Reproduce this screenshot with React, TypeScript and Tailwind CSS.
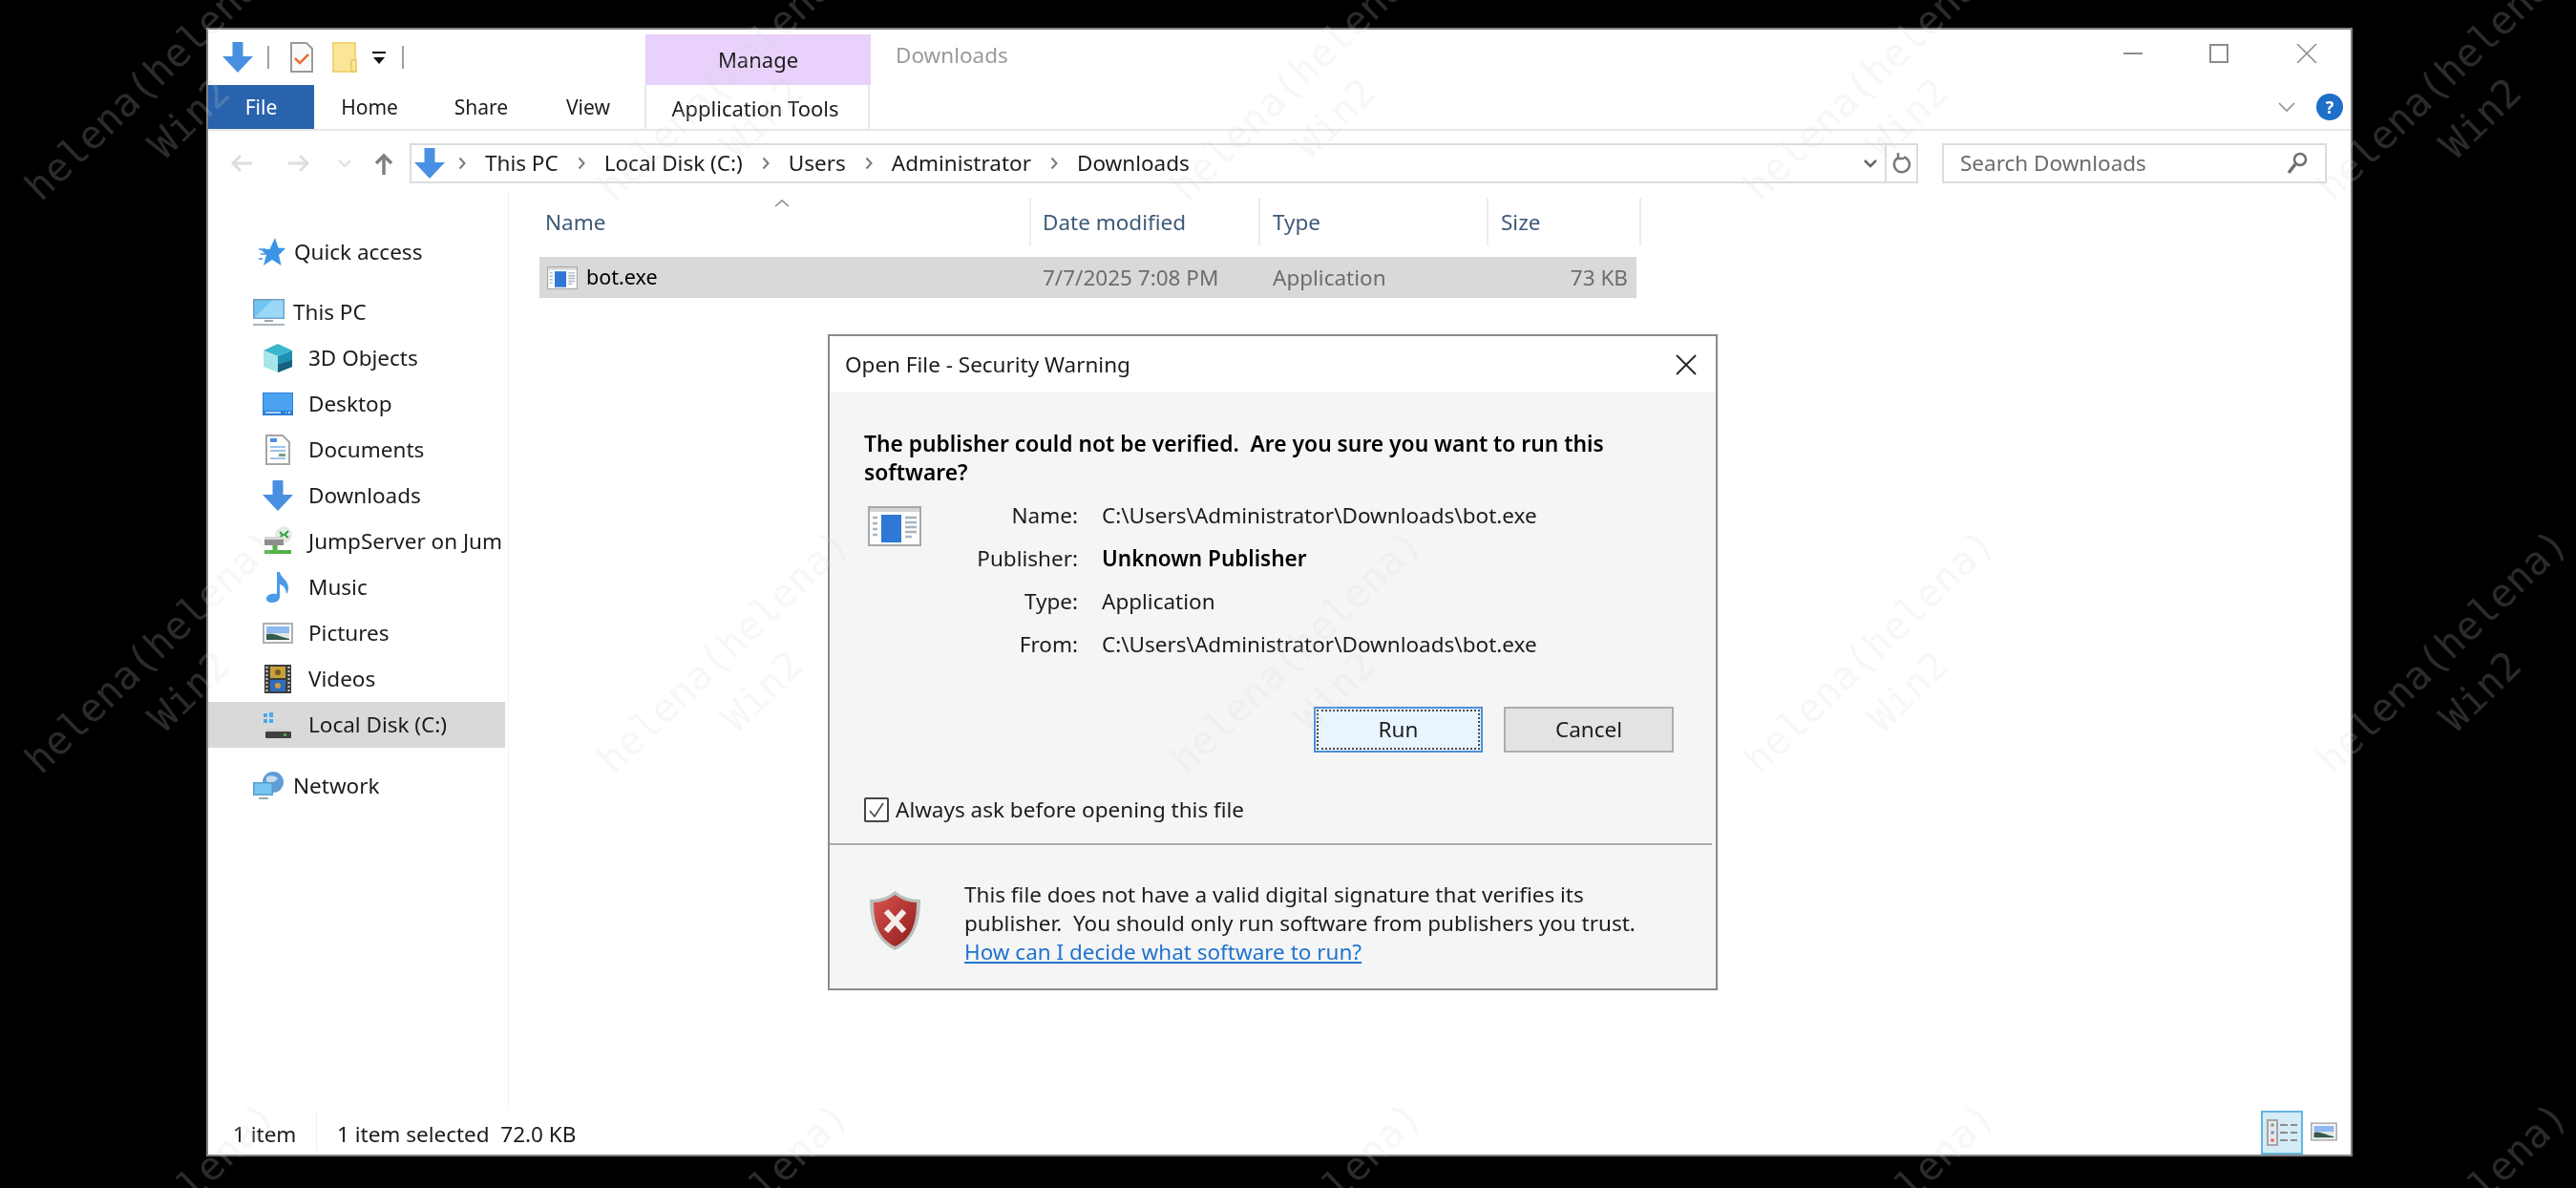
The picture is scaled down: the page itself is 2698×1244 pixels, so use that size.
import React from 'react'

const ArrowDown = ({ className = 'w-8 h-8' }: { className?: string }) => (
  <svg viewBox="0 0 32 32" className={className}>
    <path d="M10.5 0h11v15H32L16 32 0 15h10.5z" fill="#4a90e2" />
  </svg>
)

const NavArrow = ({ d, color, sw = 3 }: { d: string; color: string; sw?: number }) => (
  <svg viewBox="0 0 24 24" className="w-6 h-6" fill="none" stroke={color} strokeWidth={sw}>
    <path d={d} />
  </svg>
)

const Chevron = () => (
  <svg viewBox="0 0 8 14" className="w-[8px] h-[14px]" fill="none" stroke="#7a7a7a" strokeWidth="2">
    <path d="M1.5 1.5 6.5 7l-5 5.5" />
  </svg>
)

const ExeIcon = ({ className }: { className: string }) => (
  <svg viewBox="0 0 56 42" className={className}>
    <rect x="1" y="1" width="54" height="40" fill="#fdfdfd" stroke="#a8a8a8" strokeWidth="2" />
    <rect x="2" y="2" width="52" height="4" fill="#d4d4d4" />
    <rect x="14" y="9" width="21" height="29" fill="#2f78d6" />
    <path d="M5 12h5M5 18h5M5 24h5M5 30h5M39 12h12M39 17h12M39 22h12M39 27h12M39 32h7" stroke="#a9b4c0" strokeWidth="2.5" />
  </svg>
)

const Cube = () => (
  <svg viewBox="0 0 32 32" className="w-8 h-8">
    <path d="M16 1 31 8 16 14 1 8z" fill="#3cb6cf" />
    <path d="M1 8l15 6v17L1 25z" fill="#a6e6ea" />
    <path d="M31 8 16 14v17l15-6z" fill="#1e8fb0" />
    <path d="M16 23v8l15-6v-7z" fill="#17607f" />
  </svg>
)

const DesktopIcon = () => (
  <svg viewBox="0 0 32 24" className="w-8 h-6">
    <rect width="32" height="24" fill="#2c7fd8" />
    <rect x="1" y="1" width="30" height="18" fill="#4aa2f0" />
    <path d="M3 21h16M24 21h1M27 21h2" stroke="#dcecff" strokeWidth="1.5" />
  </svg>
)

const DocIcon = () => (
  <svg viewBox="0 0 26 32" className="w-[26px] h-8">
    <path d="M1 1h17l7 7v23H1z" fill="#fff" stroke="#a6a6a6" strokeWidth="2" />
    <path d="M5 6h7" stroke="#4a90e2" strokeWidth="4" />
    <path d="M5 13h16M5 17h16M5 25h16" stroke="#7fb0e6" strokeWidth="1.5" />
    <rect x="14" y="20" width="7" height="3" fill="#7f9a8a" />
  </svg>
)

const JumpIcon = () => (
  <svg viewBox="0 0 32 32" className="w-8 h-8">
    <circle cx="22" cy="9" r="9" fill="#e4ece4" />
    <path d="M18 6l3 3-3 3M27 5l-4 4 4 3" stroke="#2f9e44" strokeWidth="2" fill="none" />
    <rect x="2" y="11" width="20" height="9" fill="#8e8e8e" />
    <rect x="2" y="11" width="20" height="3" fill="#d8d8d8" />
    <path d="M13 20v5" stroke="#54b14c" strokeWidth="5" />
    <path d="M2 27h28" stroke="#54b14c" strokeWidth="4" />
  </svg>
)

const MusicIcon = () => (
  <svg viewBox="0 0 26 32" className="w-[26px] h-8">
    <path d="M12 0h3c1 6 9 8 9 17 0 3-1 5-2 6 0-5-3-9-7-10v13c0 3-3 6-8 6-4 0-6-2-6-4 0-4 5-6 11-5z" fill="#4a9be8" />
  </svg>
)

const PictureIcon = ({ className = 'w-8 h-[22px]' }: { className?: string }) => (
  <svg viewBox="0 0 32 22" className={className}>
    <rect x="1" y="1" width="30" height="20" fill="#fff" stroke="#b0b0b0" strokeWidth="2" />
    <rect x="4" y="4" width="24" height="7" fill="#8fb8ee" />
    <rect x="4" y="11" width="24" height="7" fill="#dfe8e4" />
    <path d="M4 12c6-2 12 2 24 5v1H4z" fill="#35594a" />
  </svg>
)

const VideoIcon = () => (
  <svg viewBox="0 0 28 30" className="w-7 h-[30px]">
    <rect width="28" height="30" fill="#3c3c3c" />
    <path d="M2.5 2v26M25.5 2v26" stroke="#d5d5d5" strokeWidth="2" strokeDasharray="2 2" />
    <rect x="6" y="2" width="16" height="12" fill="#c9a13a" />
    <rect x="6" y="16" width="16" height="12" fill="#2f6cc0" />
    <circle cx="14" cy="8" r="3" fill="#7a5a2a" />
    <circle cx="14" cy="22" r="3" fill="#c9a13a" />
  </svg>
)

const DiskIcon = () => (
  <svg viewBox="0 0 32 28" className="w-8 h-7">
    <path d="M1 2h4v4H1zM7 1h4v5H7zM1 8h4v4H1zM7 8h4v4H7z" fill="#4aa8ee" />
    <path d="M5 18h22l3 3H3z" fill="#d2d2d2" />
    <rect x="3" y="21" width="27" height="7" rx="1" fill="#3f3f3f" />
    <rect x="22" y="23.5" width="3" height="2" fill="#4fd14f" />
  </svg>
)

const MonitorIcon = () => (
  <svg viewBox="0 0 33 28" className="w-[33px] h-7">
    <rect width="33" height="21" fill="#6e9fc4" />
    <rect x="1.5" y="1.5" width="30" height="18" fill="#70c4f2" />
    <path d="M1.5 19.5 20 1.5h11.5v18z" fill="#9bd7f7" />
    <path d="M12 23h9" stroke="#9aa8b2" strokeWidth="2" />
    <path d="M0 27h33" stroke="#a9b5bd" strokeWidth="2" />
  </svg>
)

const StarIcon = () => (
  <svg viewBox="0 0 28 30" className="w-7 h-[30px]">
    <path d="M17 0l3.5 10.5L28 11l-7 7 2.5 11L14 23l-9 6 3-11-6-6h9.5z" fill="#3d94e6" />
    <path d="M0 12h7M2 17h5M0 22h4" stroke="#3d94e6" strokeWidth="1.5" />
  </svg>
)

const NetworkIcon = () => (
  <svg viewBox="0 0 33 30" className="w-[33px] h-[30px]">
    <circle cx="21" cy="11" r="11" fill="#5f9ed6" />
    <path d="M14 6c4-3 9-2 12 1-2 4-8 6-12 3z" fill="#c3dcf0" />
    <rect x="0" y="11" width="21" height="14" fill="#5b9ec9" />
    <rect x="1.5" y="12.5" width="18" height="11" fill="#74c6f0" />
    <path d="M6 28h10" stroke="#9aa8b2" strokeWidth="2" />
  </svg>
)

const Shield = () => (
  <svg viewBox="0 0 53 62" className="w-[53px] h-[62px]">
    <defs>
      <linearGradient id="shield" x1="0" y1="0" x2="1" y2="1">
        <stop offset="0" stopColor="#d9534f" />
        <stop offset="1" stopColor="#8e1c1a" />
      </linearGradient>
    </defs>
    <path d="M26.5 0C33 6 43 9 53 9c0 24-6 43-26.5 53C6 52 0 33 0 9c10 0 20-3 26.5-9z" fill="#b9c0bd" />
    <path d="M26.5 4C33 9 41 12 49 12c0 21-5 38-22.500 46C9 50 4 33 4 12c8 0 16-3 22.500-8z" fill="url(#shield)" />
    <path d="M17 21l19 21M36 21 17 42" stroke="#f4ecec" strokeWidth="6" />
  </svg>
)

const sideItems = [
  { label: '3D Objects', icon: <Cube /> },
  { label: 'Desktop', icon: <DesktopIcon /> },
  { label: 'Documents', icon: <DocIcon /> },
  { label: 'Downloads', icon: <ArrowDown /> },
  { label: 'JumpServer on Jum', icon: <JumpIcon /> },
  { label: 'Music', icon: <MusicIcon /> },
  { label: 'Pictures', icon: <PictureIcon /> },
  { label: 'Videos', icon: <VideoIcon /> },
  { label: 'Local Disk (C:)', icon: <DiskIcon />, active: true },
]

const crumbs = ['This PC', 'Local Disk (C:)', 'Users', 'Administrator', 'Downloads']

const details = [
  { label: 'Name:', value: 'C:\\Users\\Administrator\\Downloads\\bot.exe' },
  { label: 'Publisher:', value: 'Unknown Publisher', bold: true },
  { label: 'Type:', value: 'Application' },
  { label: 'From:', value: 'C:\\Users\\Administrator\\Downloads\\bot.exe' },
]

const marks = Array.from({ length: 15 }, (_, i) => i)

const Dialog = () => (
  <div className="absolute left-[649px] top-[319px] w-[932px] h-[687px] border-2 border-[#8a8a8a] bg-[#f5f5f5] flex flex-col">
    <div className="h-[59px] shrink-0 bg-white flex items-center justify-between pl-4 pr-[20px]">
      <span>Open File - Security Warning</span>
      <svg viewBox="0 0 22 22" className="w-[22px] h-[22px]" fill="none" stroke="#222" strokeWidth="1.8">
        <path d="M1 1l20 20M21 1 1 21" />
      </svg>
    </div>
    <div className="pl-9 pt-[39px] w-[860px] font-semibold text-black text-[22.800px] leading-[30px]">
      The publisher could not be verified.&nbsp; Are you sure you want to run this software?
    </div>
    <div className="flex mt-[7px] h-[185px]">
      <ExeIcon className="ml-[40px] mt-[13px] w-[56px] h-[42px]" />
      <div className="flex flex-col">
        {details.map((d) => (
          <div key={d.label} className="flex h-[45px] items-center">
            <span className="w-[164px] text-right">{d.label}</span>
            <span className={d.bold ? 'ml-[25px] font-semibold text-black' : 'ml-[25px]'}>{d.value}</span>
          </div>
        ))}
      </div>
    </div>
    <div className="flex justify-end gap-[22px] pr-[44px] mt-[38px]">
      <button className="w-[177px] h-[48px] bg-[#e9f5fe] border-2 border-[#4a90d9] p-[1px]">
        <span className="w-full h-full border-2 border-dotted border-[#4a4a4a] flex items-center justify-center">Run</span>
      </button>
      <button className="w-[178px] h-[48px] bg-[#e3e3e3] border-2 border-[#adadad]">Cancel</button>
    </div>
    <label className="flex items-center ml-9 mt-[47px] h-[26px]">
      <span className="w-[26px] h-[26px] border-2 border-[#444] bg-white flex items-center justify-center rounded-[2px]">
        <svg viewBox="0 0 18 18" className="w-[18px] h-[18px]" fill="none" stroke="#444" strokeWidth="1.6">
          <path d="M2 10l5 6L16 2" />
        </svg>
      </span>
      <span className="ml-[7px]">Always ask before opening this file</span>
    </label>
    <div className="mt-[22px] w-[924px] border-t-2 border-[#a8a8a8] shadow-[0_1px_0_#ffffff]" />
    <div className="flex mt-[21px]">
      <div className="ml-[42px] mt-[27px]">
        <Shield />
      </div>
      <div className="ml-[46px] w-[800px] pt-[16px] leading-[30px]">
        <p>This file does not have a valid digital signature that verifies its</p>
        <p>publisher.&nbsp; You should only run software from publishers you trust.</p>
        <a href="#" className="text-[#1f73cf] underline">How can I decide what software to run?</a>
      </div>
    </div>
  </div>
)

export default function App() {
  return (
    <div className="relative w-[2698px] h-[1244px] bg-black overflow-hidden pl-[216px] pt-[29px] font-['Noto_Sans',sans-serif] text-[22.500px] text-[#1c1c1c] blur-[0.5px]">
      <div className="relative w-[2248px] h-[1182px] bg-white border-2 border-[#808080] flex flex-col">
        {/* title bar */}
        <div className="h-[58px] shrink-0 flex items-end">
          <div className="h-[58px] flex items-center pl-[15px]">
            <ArrowDown />
            <span className="ml-[15px] h-6 w-[2px] bg-[#a0a0a0]" />
            <svg viewBox="0 0 24 32" className="ml-[22px] w-6 h-8">
              <path d="M1 1h16l6 6v24H1z" fill="#fafafa" stroke="#9a9a9a" strokeWidth="2" />
              <path d="M5 17l5 5 9-9" fill="none" stroke="#e8703a" strokeWidth="2.5" />
            </svg>
            <svg viewBox="0 0 26 32" className="ml-[20px] w-[26px] h-8">
              <rect x="1" y="1" width="23" height="30" fill="#fbe596" stroke="#f0d476" strokeWidth="2" />
              <rect x="20" y="19" width="5" height="12" fill="#fbe596" stroke="#e8c860" strokeWidth="1.5" />
            </svg>
            <svg viewBox="0 0 14 13" className="ml-[16px] w-[14px] h-[13px]">
              <path d="M0 1h14" stroke="#111" strokeWidth="2" />
              <path d="M1 6h12l-6 7z" fill="#111" />
            </svg>
            <span className="ml-[17px] h-6 w-[2px] bg-[#a0a0a0]" />
          </div>
          <div className="ml-[253px] w-[236px] h-[53px] bg-[#e8d1fa] flex items-center justify-center text-[22px]">Manage</div>
          <div className="ml-[26px] h-[58px] flex items-center pb-1 text-[#9a9a9a]">Downloads</div>
          <div className="ml-auto h-[58px] flex items-center pr-[35px] pb-2">
            <span className="w-[20px] h-[2px] bg-[#8c8c8c]" />
            <span className="ml-[70px] w-[20px] h-[20px] border-2 border-[#8c8c8c]" />
            <svg viewBox="0 0 22 20" className="ml-[71px] w-[22px] h-[20px]" fill="none" stroke="#8c8c8c" strokeWidth="1.5">
              <path d="M1 0l20 20M21 0 1 20" />
            </svg>
          </div>
        </div>

        {/* ribbon tabs */}
        <div className="h-[48px] shrink-0 flex border-b-2 border-[#e6e6e6] text-[21px]">
          <div className="w-[111px] h-[46px] bg-[#2a63ad] text-white flex items-center justify-center pt-[2px]">File</div>
          {[['Home', 'w-[116px]'], ['Share', 'w-[118px]'], ['View', 'w-[106px]']].map(([t, w]) => (
            <div key={t} className={`${w} h-[46px] flex items-center justify-center pt-[2px]`}>{t}</div>
          ))}
          <div className="ml-[6px] w-[236px] h-[46px] flex items-center justify-center border-x-2 border-[#e8e8e8] pr-1 pt-[2px] text-[22px]">Application Tools</div>
          <div className="ml-auto flex items-center pr-[8px]">
            <svg viewBox="0 0 18 10" className="w-[18px] h-[10px]" fill="none" stroke="#8c8c8c" strokeWidth="1.6">
              <path d="M1 1l8 8 8-8" />
            </svg>
            <span className="ml-[22px] w-7 h-7 rounded-full bg-[#1e6fc8] text-white font-bold text-[18px] flex items-center justify-center">?</span>
          </div>
        </div>

        {/* navigation bar */}
        <div className="h-[63px] shrink-0 flex items-start pt-[13px]">
          <div className="h-[42px] flex items-center pl-[23px]">
            <NavArrow d="M23 12H3M11 4l-8 8 8 8" color="#dedede" />
            <span className="ml-[36px]"><NavArrow d="M1 12h20M13 4l8 8-8 8" color="#dedede" /></span>
            <svg viewBox="0 0 14 8" className="ml-[29px] w-[14px] h-2" fill="none" stroke="#dedede" strokeWidth="2">
              <path d="M1 1l6 6 6-6" />
            </svg>
            <span className="ml-[22px]"><NavArrow d="M12 24V4M4 12l8-8 8 8" color="#808080" sw={3.5} /></span>
          </div>
          <div className="ml-[15px] w-[1580px] h-[42px] border-2 border-[#dcdcdc] flex items-center">
            <ArrowDown className="ml-[3px] w-8 h-8" />
            <div className="flex items-center ml-[14px]">
              <Chevron />
              {crumbs.map((c, i) => (
                <React.Fragment key={c}>
                  <span className="mx-[20px]">{c}</span>
                  {i < crumbs.length - 1 && <Chevron />}
                </React.Fragment>
              ))}
            </div>
            <svg viewBox="0 0 14 9" className="ml-auto mr-[8px] w-[14px] h-[9px]" fill="none" stroke="#666" strokeWidth="2.5">
              <path d="M1 1l6 6 6-6" />
            </svg>
            <div className="w-[33px] h-full border-l-2 border-[#dcdcdc] flex items-center justify-center">
              <svg viewBox="0 0 20 24" className="w-5 h-6" fill="none" stroke="#777" strokeWidth="2.5">
                <path d="M12 5.500a8 8 0 1 1-6.500 1M6 1v6h6" />
              </svg>
            </div>
          </div>
          <div className="ml-[25px] w-[403px] h-[42px] border-2 border-[#dcdcdc] flex items-center pl-[17px] pr-[18px] justify-between text-[#6b6b6b]">
            <span>Search Downloads</span>
            <svg viewBox="0 0 22 24" className="w-[22px] h-6" fill="none" stroke="#6f6f6f">
              <circle cx="14" cy="8" r="6" strokeWidth="2.5" />
              <path d="M9 13 2 22" strokeWidth="3.5" />
            </svg>
          </div>
        </div>

        {/* body */}
        <div className="flex-1 min-h-0 flex">
          <div className="w-[315px] shrink-0 border-r border-[#f2f2f2] pt-[40px]">
            <div className="h-[48px] flex items-center pl-[53px]">
              <StarIcon />
              <span className="ml-[9px]">Quick access</span>
            </div>
            <div className="h-[48px] mt-[15px] flex items-center pl-[47px]">
              <MonitorIcon />
              <span className="ml-[9px]">This PC</span>
            </div>
            {sideItems.map((it) => (
              <div key={it.label} className={`w-[311px] h-[48px] flex items-center ${it.active ? 'bg-[#d9d9d9]' : ''}`}>
                <div className="w-[105px] pl-[51px] pr-[10px] flex justify-center shrink-0">{it.icon}</div>
                <span className="whitespace-nowrap">{it.label}</span>
              </div>
            ))}
            <div className="h-[48px] mt-[16px] flex items-center pl-[47px]">
              <NetworkIcon />
              <span className="ml-[9px]">Network</span>
            </div>
          </div>

          <div className="flex-1 pl-[32px] pt-[7px]">
            <div className="grid grid-cols-[515px_240px_239px_160px] w-[1154px] h-[50px] text-[#3f5a78]">
              <div className="relative border-r-2 border-[#ececec] pl-[6px] pt-[2px] flex items-center">
                Name
                <svg viewBox="0 0 16 8" className="absolute left-[246px] top-[2px] w-4 h-2" fill="none" stroke="#8a8a8a" strokeWidth="1.6">
                  <path d="M1 7l7-6 7 6" />
                </svg>
              </div>
              <div className="border-r-2 border-[#ececec] pl-[12px] pt-[2px] flex items-center">Date modified</div>
              <div className="border-r-2 border-[#ececec] pl-[13px] pt-[2px] flex items-center">Type</div>
              <div className="border-r-2 border-[#ececec] pl-[13px] pt-[2px] flex items-center">Size</div>
            </div>
            <div className="mt-[12px] w-[1149px] h-[43px] bg-[#d9d9d9] grid grid-cols-[515px_240px_239px_155px] items-center">
              <div className="flex items-center pl-[8px] text-black">
                <ExeIcon className="w-[32px] h-[24px]" />
                <span className="ml-[9px] text-[21.500px]">bot.exe</span>
              </div>
              <div className="pl-[12px] text-[#6d6d6d]">7/7/2025 7:08 PM</div>
              <div className="pl-[13px] text-[#6d6d6d]">Application</div>
              <div className="pr-[9px] text-right text-[#6d6d6d]">73 KB</div>
            </div>
          </div>
        </div>

        {/* status bar */}
        <div className="h-[48px] shrink-0 flex items-center">
          <div className="w-[114px] pl-[26px] pt-[6px] border-r border-[#f0f0f0]">1 item</div>
          <div className="pl-[21px] pt-[6px]">1 item selected&nbsp; 72.0 KB</div>
          <div className="ml-auto self-end flex items-center pr-[14px]">
            <div className="w-[44px] h-[46px] bg-[#d3ecf5] border-2 border-[#64b5e0] flex items-center justify-center">
              <svg viewBox="0 0 32 28" className="w-8 h-7">
                <rect x="1" y="1" width="10" height="26" fill="#e8e8e8" stroke="#a6a6a6" strokeWidth="2" />
                <rect x="4.500" y="4.500" width="3" height="3" fill="#7a9a7a" />
                <rect x="4.500" y="12.500" width="3" height="3" fill="#5a8ae6" />
                <rect x="4.500" y="20.500" width="3" height="3" fill="#e05a5a" />
                <path d="M14 6h8M25 6h7M14 14h8M25 14h7M14 22h8M25 22h7" stroke="#8c8c8c" strokeWidth="2" />
              </svg>
            </div>
            <PictureIcon className="ml-[8px] w-[28px] h-[22px] mb-[2px]" />
          </div>
        </div>

        <Dialog />
      </div>

      {/* watermark */}
      <div className="absolute left-[-122px] top-[-197px] grid grid-cols-[repeat(5,600px)] auto-rows-[600px] pointer-events-none font-['DejaVu_Sans_Mono',monospace] text-[41px] leading-[58px] text-[rgba(215,215,215,0.2)]">
        {marks.map((m) => (
          <div key={m} className="flex items-center justify-center">
            <div className="-rotate-[44deg] text-center whitespace-nowrap">
              helena(helena)
              <br />
              Win2
            </div>
          </div>
        ))}
      </div>
    </div>
  )
}
